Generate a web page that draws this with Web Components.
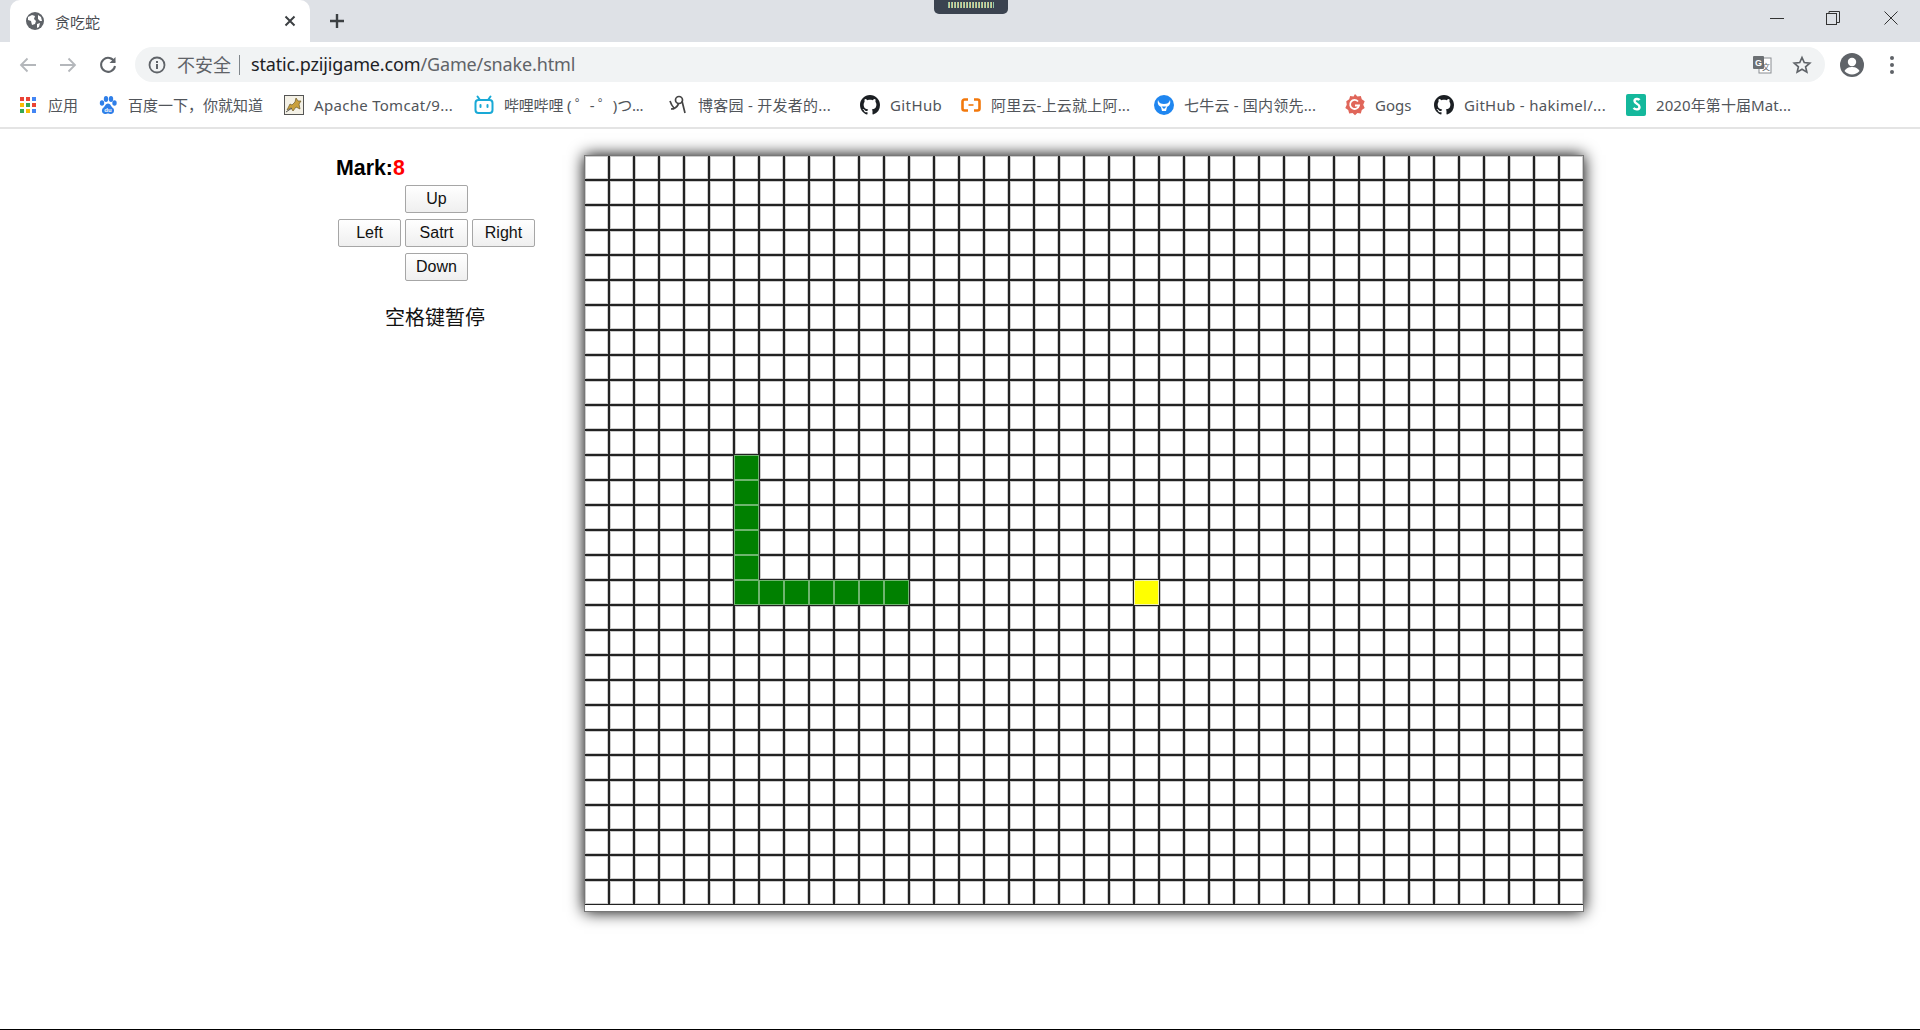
<!DOCTYPE html>
<html lang="zh">
<head>
<meta charset="utf-8">
<title>贪吃蛇</title>
<style>
  html, body { margin: 0; height: 100%; overflow: hidden; background: #fff; }
  body { display: flex; flex-direction: column; font-family: "Liberation Sans", "Noto Sans CJK SC", sans-serif; }
</style>
</head>
<body>
<browser-tabstrip title-text="贪吃蛇"></browser-tabstrip>
<browser-toolbar host="static.pzijigame.com" path="/Game/snake.html"></browser-toolbar>
<bookmark-bar>
  <bookmark-item icon="apps" w="80">应用</bookmark-item>
  <bookmark-item icon="baidu" w="186">百度一下，你就知道</bookmark-item>
  <bookmark-item icon="tomcat" w="190" ls=".3">Apache Tomcat/9...</bookmark-item>
  <bookmark-item icon="bili" w="194" ls="-.2">哔哩哔哩 ( ゜- ゜)つ...</bookmark-item>
  <bookmark-item icon="cnblogs" w="192" ls=".25">博客园 - 开发者的...</bookmark-item>
  <bookmark-item icon="github" w="101" ls=".4">GitHub</bookmark-item>
  <bookmark-item icon="aliyun" w="193" ls=".2">阿里云-上云就上阿...</bookmark-item>
  <bookmark-item icon="qiniu" w="191" ls=".2">七牛云 - 国内领先...</bookmark-item>
  <bookmark-item icon="gogs" w="89">Gogs</bookmark-item>
  <bookmark-item icon="github" w="192" ls=".3">GitHub - hakimel/...</bookmark-item>
  <bookmark-item icon="mat" w="190" ls=".1">2020年第十届Mat...</bookmark-item>
</bookmark-bar>
<snake-game score="8"></snake-game>

<script>
const ICONS = {
  apps: `<svg width="16" height="16" viewBox="0 0 16 16">${[0,6,12].map((y,r)=>[0,6,12].map((x,c)=>`<rect x="${x}" y="${y}" width="4" height="4" fill="${[['#ea4335','#ea4335','#4285f4'],['#fbbc04','#34a853','#ea4335'],['#34a853','#fbbc04','#4285f4']][r][c]}"/>`).join('')).join('')}</svg>`,
  baidu: `<svg width="18" height="20" viewBox="0 0 18 20" fill="#2f7fe8"><ellipse cx="3" cy="8" rx="2.2" ry="2.8"/><ellipse cx="7" cy="4" rx="2.2" ry="3"/><ellipse cx="12" cy="4" rx="2.2" ry="3"/><ellipse cx="15.5" cy="8" rx="2.2" ry="2.8"/><path d="M9 8.500c-2.500 0-3 3-5 4.500-2 2-1 6 2 6 1.500 0 2-.5 3-.5s1.500.5 3 .5c3 0 4-4 2-6-2-1.500-2.500-4.500-5-4.500z"/><text x="9" y="17" font-size="6" font-weight="700" fill="#fff" text-anchor="middle" font-family="Liberation Sans">du</text></svg>`,
  tomcat: `<svg width="20" height="20" viewBox="0 0 20 20"><rect x=".5" y=".5" width="19" height="19" fill="#f4f1e6" stroke="#555"/><path d="M3 15l3-6 2 1 3-3 1-4 2 3 3 0-2 3 1 5-4-2-3 4-2-3z" fill="#c9a03c" stroke="#6b5a2a" stroke-width=".7"/><path d="M2 17l6-4" stroke="#555" stroke-width="1"/></svg>`,
  bili: `<svg width="20" height="20" viewBox="0 0 20 20" fill="none" stroke="#19a9d6" stroke-width="2"><rect x="1.500" y="5" width="17" height="13" rx="3"/><path d="M6 5L3.500 1.500M14 5l2.500-3.500" stroke-linecap="round"/><path d="M6.500 10v2M13.500 10v2" stroke-linecap="round"/></svg>`,
  cnblogs: `<svg width="18" height="22" viewBox="0 0 18 22" fill="none" stroke="#444" stroke-width="1.700"><circle cx="10" cy="6" r="3.500"/><path d="M13 7c1 4 2 8 3 12M9.500 10C8 13 6 15 2 15M1 7c1 3 2 5 4 7"/></svg>`,
  github: `<svg width="20" height="20" viewBox="0 0 16 16" fill="#1b1f23"><path d="M8 0C3.580 0 0 3.580 0 8c0 3.540 2.290 6.530 5.470 7.590.4.070.55-.17.55-.38 0-.19-.01-.82-.01-1.490-2.010.37-2.530-.49-2.690-.94-.09-.23-.48-.94-.82-1.130-.28-.15-.68-.52-.01-.53.63-.01 1.080.58 1.230.82.720 1.210 1.870.87 2.330.66.070-.52.280-.87.510-1.070-1.780-.2-3.640-.89-3.640-3.950 0-.87.310-1.590.820-2.150-.08-.2-.36-1.020.08-2.120 0 0 .670-.21 2.200.82.640-.18 1.320-.27 2-.27s1.360.09 2 .27c1.530-1.040 2.200-.82 2.200-.82.440 1.100.160 1.920.080 2.120.510.560.820 1.270.820 2.150 0 3.070-1.870 3.750-3.650 3.950.290.250.540.730.540 1.480 0 1.070-.01 1.930-.01 2.200 0 .210.150.460.550.380A8.010 8.010 0 0 0 16 8c0-4.420-3.580-8-8-8z"/></svg>`,
  aliyun: `<svg width="20" height="14" viewBox="0 0 20 14" fill="none" stroke="#f2780c" stroke-width="2.600"><path d="M7 1.500H3.500a2 2 0 0 0-2 2v7a2 2 0 0 0 2 2H7M13 1.500h3.500a2 2 0 0 1 2 2v7a2 2 0 0 1-2 2H13"/><path d="M7.500 7h5" stroke-width="1.600"/></svg>`,
  qiniu: `<svg width="20" height="20" viewBox="0 0 20 20"><circle cx="10" cy="10" r="10" fill="#1f86f0"/><path d="M4 5c1 3 3 4 6 4s5-1 6-4c1 4-1 6-3 7l-1 4H8l-1-4C5 11 3 9 4 5z" fill="#fff"/><path d="M7.500 11.500h5L10 14z" fill="#1f86f0"/></svg>`,
  gogs: `<svg width="20" height="22" viewBox="0 0 20 22"><path d="M10 0l2.500 2.500 3.500-.5 1 3.500 3 2-1.500 3.500 1.500 3.500-3 2-1 3.500-3.500-.5L10 22l-2.500-2.500-3.500.5-1-3.500-3-2 1.500-3.500L1 7.500l3-2 1-3.500 3.500.5z" transform="translate(.3 0) scale(.97)" fill="#e0665a"/><path d="M13 7.500a4.500 4.500 0 1 0 1 4h-4" fill="none" stroke="#fff" stroke-width="1.800"/></svg>`,
  mat: `<svg width="20" height="22" viewBox="0 0 20 22"><rect width="20" height="22" rx="2" fill="#14b89c"/><path d="M13.500 6c-1-1.500-5-1.500-5 1 0 3 5 2.500 5 6 0 3-4 3-6 1" fill="none" stroke="#fff" stroke-width="2.400"/></svg>`
};

class BrowserTabstrip extends HTMLElement {
  constructor() {
    super();
    this.attachShadow({ mode: 'open' });
  }

  connectedCallback() {
    this.shadowRoot.innerHTML = `
      <style>
        :host { display: flex; position: relative; height: 42px; background: #dee1e6; padding-left: 10px; flex: none; }
        .tab {
          width: 300px; box-sizing: border-box; background: #fff; border-radius: 10px 10px 0 0;
          display: flex; align-items: center; padding: 0 14px 0 16px; color: #4a4d52;
          font: 15px "Noto Sans CJK SC", sans-serif;
        }
        .tab span { margin-left: 11px; flex: 1; }
        .plus { margin-left: 15px; width: 24px; display: flex; align-items: center; justify-content: center; }
        .win { margin-left: auto; display: flex; }
        .win div { width: 58px; display: flex; align-items: center; justify-content: center; padding-bottom: 6px; }
        .win div:first-child { width: 54px; }
        .notch {
          position: absolute; left: 934px; top: 0; width: 74px; height: 14px; background: #3b4350;
          border-radius: 0 0 5px 5px; display: flex; justify-content: center; padding-top: 2px; box-sizing: border-box;
        }
        .notch i { width: 46px; height: 6px; background: repeating-linear-gradient(90deg, #8fc6a8 0 1px, #d9c98a 1px 2px, #3b4350 2px 3px); }
      </style>
      <div class="tab">
        <svg width="18" height="18" viewBox="0 0 18 18"><circle cx="9" cy="9" r="9" fill="#5f6368"/><path d="M2 5l4-2 3 1-1 3 2 2-1 3-3 1-1-4-3-1zM12 3l3 2 1 4-2 0-2-2zM11 12l3-1-1 4-2 1z" fill="#fff"/></svg>
        <span>${this.getAttribute('title-text')}</span>
        <svg width="12" height="12" viewBox="0 0 12 12" stroke="#3c4043" stroke-width="2"><path d="M1.500 1.500l9 9M10.500 1.500l-9 9"/></svg>
      </div>
      <div class="plus"><svg width="16" height="16" viewBox="0 0 16 16" stroke="#3c4043" stroke-width="2.400"><path d="M8 1v14M1 8h14"/></svg></div>
      <div class="win">
        <div><svg width="14" height="14" viewBox="0 0 14 14" stroke="#333" stroke-width="1"><path d="M0 7.500h14"/></svg></div>
        <div><svg width="14" height="16" viewBox="0 0 14 16" fill="none" stroke="#333" stroke-width="1"><rect x=".5" y="3.500" width="10" height="11"/><path d="M3 3.500v-2h10.500v11h-3"/></svg></div>
        <div><svg width="14" height="14" viewBox="0 0 14 14" stroke="#333" stroke-width="1"><path d="M.5.500l13 13M13.500.500l-13 13"/></svg></div>
      </div>
      <div class="notch"><i></i></div>
    `;
  }
}

class BrowserToolbar extends HTMLElement {
  constructor() {
    super();
    this.attachShadow({ mode: 'open' });
  }

  connectedCallback() {
    this.shadowRoot.innerHTML = `
      <style>
        :host { display: flex; height: 42px; padding: 5px 8px 0; box-sizing: border-box; background: #fff; flex: none; }
        .btn { width: 40px; height: 35px; display: flex; align-items: center; justify-content: center; flex: none; }
        .pill {
          margin: 0 7px; flex: 1; height: 35px; border-radius: 18px; background: #f1f3f4;
          display: flex; align-items: center; padding: 0 3px 0 12px;
          font: 18px "Noto Sans", "Noto Sans CJK SC", sans-serif; color: #5f6368;
        }
        .warn { margin-left: 10px; position: relative; top: -1px; }
        .sep { width: 1px; height: 20px; background: #80868b; margin: 0 11px 0 8px; }
        .url { flex: 1; letter-spacing: -.15px; white-space: nowrap; position: relative; top: -1px; }
        .url b { font-weight: 400; color: #202124; }
      </style>
      <div class="btn"><svg width="18" height="16" viewBox="0 0 18 16" fill="none" stroke="#b4b7bb" stroke-width="1.800"><path d="M17 8H2M8.500 1.500L2 8l6.500 6.500"/></svg></div>
      <div class="btn"><svg width="18" height="16" viewBox="0 0 18 16" fill="none" stroke="#b4b7bb" stroke-width="1.800"><path d="M1 8h15M9.500 1.500L16 8l-6.500 6.500"/></svg></div>
      <div class="btn"><svg width="18" height="18" viewBox="0 0 18 18" fill="none" stroke="#5f6368" stroke-width="2"><path d="M15.500 6a7 7 0 1 0 .5 4"/><path d="M16.500 1v6h-6" fill="#5f6368" stroke="none"/></svg></div>
      <div class="pill">
        <svg width="20" height="20" viewBox="0 0 20 20" fill="none" stroke="#5f6368" stroke-width="1.800"><circle cx="10" cy="10" r="7.500"/><path d="M10 9v5M10 6v2" stroke-width="2"/></svg>
        <span class="warn">不安全</span><span class="sep"></span>
        <span class="url"><b>${this.getAttribute('host')}</b>${this.getAttribute('path')}</span>
        <div class="btn" style="width:40px"><svg width="20" height="20" viewBox="0 0 20 20"><rect x="7" y="3" width="12" height="15" fill="#fff" stroke="#8a8d91"/><rect x="1" y="1" width="11" height="13" rx="1" fill="#6b6f73"/><text x="6.500" y="11" font-size="9" font-weight="700" fill="#fff" text-anchor="middle" font-family="Liberation Sans">G</text><text x="14" y="15" font-size="8" fill="#5f6368" text-anchor="middle" font-family="Noto Sans CJK SC">文</text></svg></div>
        <div class="btn"><svg width="20" height="20" viewBox="0 0 24 24" fill="none" stroke="#5f6368" stroke-width="2"><path d="M12 3l2.700 6.100 6.600.6-5 4.400 1.500 6.500L12 17.200l-5.800 3.400 1.500-6.500-5-4.400 6.600-.6z"/></svg></div>
      </div>
      <div class="btn"><svg width="24" height="24" viewBox="0 0 24 24"><circle cx="12" cy="12" r="12" fill="#5f6368"/><circle cx="12" cy="9" r="4.200" fill="#fff"/><path d="M4.500 18c2-3.500 5-4 7.500-4s5.500.5 7.500 4a10 10 0 0 1-15 0z" fill="#fff"/></svg></div>
      <div class="btn"><svg width="6" height="20" viewBox="0 0 6 20" fill="#5f6368"><circle cx="3" cy="3" r="2"/><circle cx="3" cy="10" r="2"/><circle cx="3" cy="17" r="2"/></svg></div>
    `;
  }
}

class BookmarkBar extends HTMLElement {
  constructor() {
    super();
    this.attachShadow({ mode: 'open' });
    this.shadowRoot.innerHTML = `
      <style>
        :host {
          display: flex; height: 45px; box-sizing: border-box; padding: 0 0 2px 18px; background: #fff;
          border-bottom: 2px solid #e4e4e4; flex: none; align-items: center;
        }
      </style>
      <slot></slot>
    `;
  }
}

class BookmarkItem extends HTMLElement {
  constructor() {
    super();
    this.attachShadow({ mode: 'open' });
  }

  connectedCallback() {
    this.shadowRoot.innerHTML = `
      <style>
        :host {
          display: flex; align-items: center; width: ${this.getAttribute('w')}px; flex: none; white-space: nowrap;
          font: 15px "Noto Sans", "Noto Sans CJK SC", sans-serif; color: #51555a;
          letter-spacing: ${this.getAttribute('ls') || 0}px;
        }
        .ic { width: 20px; height: 22px; display: flex; align-items: center; justify-content: center; margin-right: 10px; flex: none; }
      </style>
      <span class="ic">${ICONS[this.getAttribute('icon')]}</span><slot></slot>
    `;
  }
}

class ControlPad extends HTMLElement {
  constructor() {
    super();
    this.attachShadow({ mode: 'open' });
    this.shadowRoot.innerHTML = `
      <style>
        :host { display: grid; grid-template-columns: repeat(3, 63px); grid-auto-rows: 28px; column-gap: 4px; row-gap: 6px; margin-left: 3px; }
        button {
          margin: 0; padding: 0; font: 16px "Liberation Sans", sans-serif; color: #111;
          background: linear-gradient(#fff, #efefef); border: 1px solid #a6a6a6; border-radius: 2px;
        }
        .up, .down { grid-column: 2; }
        .left { grid-column: 1; }
      </style>
      <button class="up">Up</button>
      <button class="left">Left</button><button>Satrt</button><button>Right</button>
      <button class="down">Down</button>
    `;
  }
}

class GameBoard extends HTMLElement {
  constructor() {
    super();
    this.attachShadow({ mode: 'open' });
  }

  connectedCallback() {
    const snake = new Set();
    for (let r = 12; r <= 17; r++) snake.add(r * 40 + 6);
    for (let c = 6; c <= 12; c++) snake.add(17 * 40 + c);
    const food = 17 * 40 + 22;
    let cells = '';
    for (let i = 0; i < 1200; i++) {
      cells += `<i class="${snake.has(i) ? 's' : i === food ? 'f' : ''}"></i>`;
    }
    this.shadowRoot.innerHTML = `
      <style>
        :host {
          display: grid; grid-template-columns: repeat(40, 25px); grid-auto-rows: 25px; align-content: start;
          width: 1000px; height: 757px; flex: none; background: #fff;
          box-shadow: 0 0 15px #000; outline: 1px solid #777; outline-offset: -1px;
        }
        i { display: block; box-sizing: border-box; border: 1px solid #222; box-shadow: inset 0 0 0 1px rgba(0, 0, 0, .2); }
        i.s { background: #008000; border-color: #6fb56f; box-shadow: none; }
        i.f { background: #ff0; border-color: #f0f0b0; box-shadow: none; }
      </style>
      ${cells}
    `;
  }
}

class SnakeGame extends HTMLElement {
  constructor() {
    super();
    this.attachShadow({ mode: 'open' });
  }

  connectedCallback() {
    this.shadowRoot.innerHTML = `
      <style>
        :host {
          display: flex; flex: 1; box-sizing: border-box; padding: 26px 0 0 335px;
          border-bottom: 1px solid #000; background: #fff;
        }
        .panel { width: 201px; margin-right: 48px; flex: none; }
        .mark { font: 700 21.330px/30px "Liberation Sans", sans-serif; color: #000; margin: -2px 0 2px 1px; }
        .mark span { color: #f00; }
        .tip { margin: 22px 0 0 -1px; text-align: center; font: 20px/28px "Noto Sans CJK SC", sans-serif; color: #111; }
      </style>
      <div class="panel">
        <div class="mark">Mark:<span>${this.getAttribute('score')}</span></div>
        <control-pad></control-pad>
        <div class="tip">空格键暂停</div>
      </div>
      <game-board></game-board>
    `;
  }
}

customElements.define('browser-tabstrip', BrowserTabstrip);
customElements.define('browser-toolbar', BrowserToolbar);
customElements.define('bookmark-bar', BookmarkBar);
customElements.define('bookmark-item', BookmarkItem);
customElements.define('control-pad', ControlPad);
customElements.define('game-board', GameBoard);
customElements.define('snake-game', SnakeGame);
</script>
</body>
</html>
